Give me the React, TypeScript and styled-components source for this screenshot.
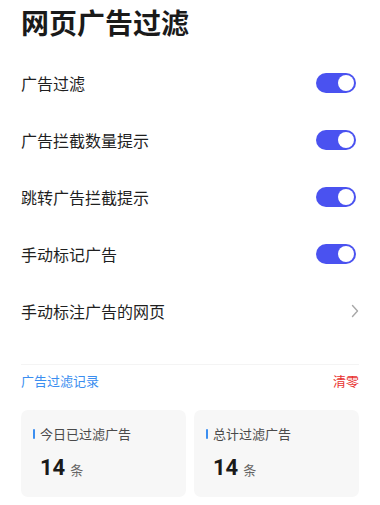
import { useState } from 'react';
import styled, { createGlobalStyle } from 'styled-components';

const GlobalStyle = createGlobalStyle`
  body {
    margin: 0;
    background: #ffffff;
    font-family: "Noto Sans CJK SC", "Noto Sans", sans-serif;
  }
`

const Page = styled.div`
  width: 380px;
  padding: 0 21px;
  box-sizing: border-box;
`

const Title = styled.h1`
  margin: 0;
  height: 54px;
  padding-top: 2px;
  box-sizing: border-box;
  font-size: 28px;
  line-height: 40px;
  font-weight: 700;
  color: #1a1a1a;
`

const Row = styled.div`
  height: 57px;
  display: flex;
  align-items: center;
  justify-content: space-between;
`

const RowLabel = styled.span`
  font-size: 16px;
  color: #1f1f1f;
`

const Track = styled.button<{ $on: boolean }>`
  width: 40px;
  height: 20px;
  border: none;
  margin-right: 3px;
  border-radius: 10px;
  background: ${(p) => (p.$on ? '#4a52f0' : '#d0d0d0')};
  display: flex;
  align-items: center;
  justify-content: ${(p) => (p.$on ? 'flex-end' : 'flex-start')};
  padding: 0 2px;
  box-sizing: border-box;
  cursor: pointer;
`

const Knob = styled.span`
  width: 16px;
  height: 16px;
  border-radius: 50%;
  background: #ffffff;
`

const Chevron = styled.svg`
  width: 8px;
  height: 14px;
  margin-right: 0;
`

const Divider = styled.div`
  height: 1px;
  background: #f4f4f4;
  margin-top: 25px;
`

const SectionHead = styled.div`
  display: flex;
  justify-content: space-between;
  align-items: center;
  height: 30px;
`

const SectionTitle = styled.span`
  font-size: 13px;
  color: #3b8ef0;
`

const ClearBtn = styled.span`
  font-size: 13px;
  color: #e8312f;
`

const Cards = styled.div`
  display: grid;
  grid-template-columns: 1fr 1fr;
  gap: 8px;
  margin-top: 15px;
`

const Card = styled.div`
  height: 87px;
  background: #f7f7f7;
  border-radius: 7px;
  padding: 15px 12px 0;
  box-sizing: border-box;
`

const CardLabel = styled.div`
  display: flex;
  align-items: center;
  gap: 5px;
  font-size: 13px;
  color: #4a4a4a;
  line-height: 18px;
`

const Bar = styled.span`
  width: 2px;
  height: 10px;
  background: #3b8ef0;
  border-radius: 1px;
`

const CardValue = styled.div`
  display: flex;
  align-items: baseline;
  gap: 5px;
  margin-top: 12px;
  padding-left: 7px;
`

const Num = styled.span`
  font-family: Roboto, "Noto Sans", sans-serif;
  font-size: 22px;
  font-weight: 700;
  color: #1a1a1a;
`

const Unit = styled.span`
  font-size: 13px;
  color: #666;
`

export default function App() {
  const [toggles, setToggles] = useState([true, true, true, true]);
  const labels = ['广告过滤', '广告拦截数量提示', '跳转广告拦截提示', '手动标记广告'];

  const flip = (i: number) => {
    setToggles(toggles.map((t, j) => (j === i ? !t : t)));
  }

  return (
    <Page>
      <GlobalStyle />
      <Title>网页广告过滤</Title>
      {labels.map((label, i) => (
        <Row key={label}>
          <RowLabel>{label}</RowLabel>
          <Track $on={toggles[i]} onClick={() => flip(i)}>
            <Knob />
          </Track>
        </Row>
      ))}
      <Row>
        <RowLabel>手动标注广告的网页</RowLabel>
        <Chevron viewBox="0 0 8 14">
          <path d="M1.5 1.5l5 5.5-5 5.5" fill="none" stroke="#a8a8a8" strokeWidth="1.4" strokeLinecap="round" strokeLinejoin="round" />
        </Chevron>
      </Row>
      <Divider />
      <SectionHead>
        <SectionTitle>广告过滤记录</SectionTitle>
        <ClearBtn>清零</ClearBtn>
      </SectionHead>
      <Cards>
        <Card>
          <CardLabel><Bar />今日已过滤广告</CardLabel>
          <CardValue><Num>14</Num><Unit>条</Unit></CardValue>
        </Card>
        <Card>
          <CardLabel><Bar />总计过滤广告</CardLabel>
          <CardValue><Num>14</Num><Unit>条</Unit></CardValue>
        </Card>
      </Cards>
    </Page>
  );
}
